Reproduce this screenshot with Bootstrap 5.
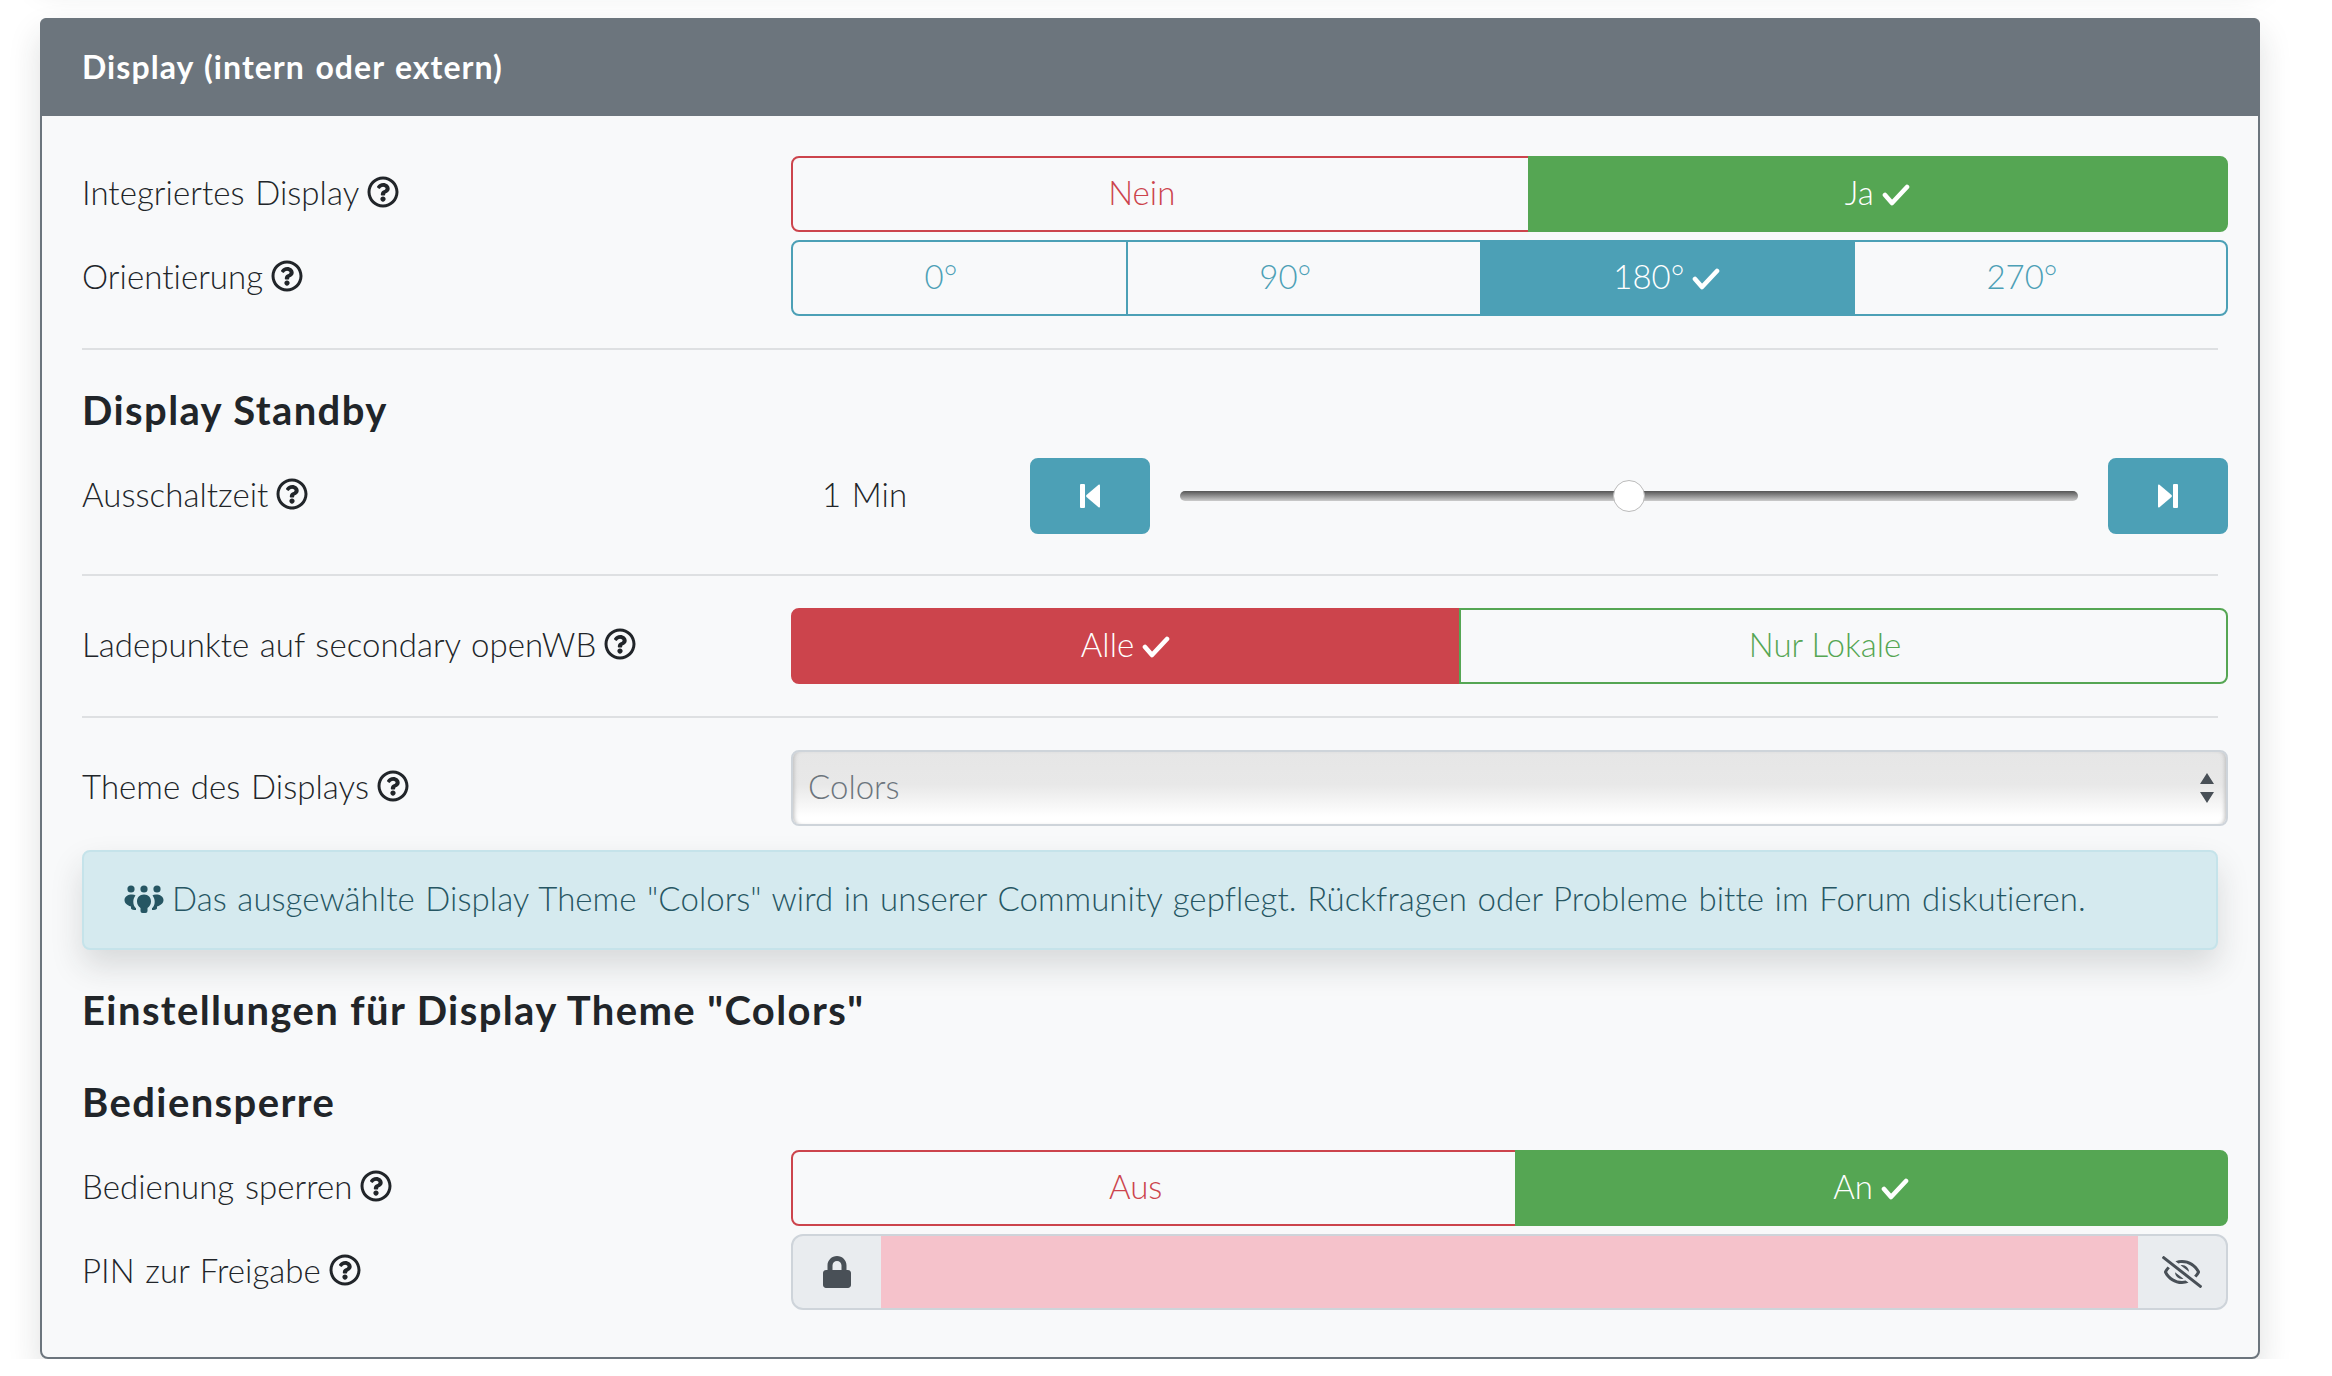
<!DOCTYPE html>
<html lang="de">
<head>
<meta charset="utf-8">
<title>Display</title>
<link href="https://cdn.jsdelivr.net/npm/bootstrap@5.3.0/dist/css/bootstrap.min.css" rel="stylesheet">
<style>
html{font-size:32px}
body{background:#fff;font-family:Lato,"Open Sans",sans-serif;font-size:33px;line-height:48px;font-weight:300;color:#212529;padding:18px 72px 0 40px;--bs-border-width:2px;--bs-border-radius:8px;letter-spacing:.05px;word-spacing:1.6px}
.prev-card{height:20px;margin:-68px 0 48px;border:0}
.set-card{--bs-card-border-width:2px;--bs-card-border-color:#6c757d;--bs-card-bg:#f8f9fa;--bs-card-border-radius:8px;--bs-card-inner-border-radius:6px;height:1341px;overflow:visible}
.set-head{background:#6c757d;color:#fff;font-size:32px;font-weight:700;letter-spacing:1.05px;height:98px;margin:-2px -2px 0;padding:0 42px;display:flex;align-items:center;border-radius:8px 8px 0 0;border:0}
.set-body{padding:40px 40px 0}
.set-row{display:flex;align-items:center;margin-right:-10px}
.set-row.tight{margin-bottom:8px}
.lbl{flex:0 0 709px;display:flex;align-items:center;gap:8px;padding-bottom:5px}
.lbl .help{margin-top:1px}
.ctl{flex:1 1 0;min-width:0}
.help{width:32px;height:32px;fill:#212529;flex:none}
.chk{width:30px;height:22px;margin-left:7px;vertical-align:-1px;fill:none;stroke:currentColor;stroke-width:4.600;stroke-linecap:round;stroke-linejoin:round}
.set-rule{margin:32px 0;border:0;border-top:2px solid #dee0e2;opacity:1}
.set-rule.after-slider{margin-top:40px}
.set-rule.before-head{margin-bottom:24px}
.btn{--bs-btn-border-width:2px;--bs-btn-border-radius:8px;--bs-btn-font-size:33px;--bs-btn-line-height:48px;--bs-btn-font-weight:300;padding-top:10px;padding-bottom:14px}
.btn-group .btn{border-radius:8px}
.tg-red{--bs-btn-color:#cc444c;--bs-btn-border-color:#cc444c;--bs-btn-hover-color:#cc444c;--bs-btn-hover-bg:transparent;--bs-btn-hover-border-color:#cc444c;--bs-btn-active-bg:#cc444c;--bs-btn-active-color:#fff}
.tg-green{--bs-btn-color:#55a653;--bs-btn-border-color:#55a653;--bs-btn-hover-color:#55a653;--bs-btn-hover-bg:transparent;--bs-btn-hover-border-color:#55a653;--bs-btn-active-bg:#55a653;--bs-btn-active-color:#fff}
.tg-info{--bs-btn-color:#4ca0b6;--bs-btn-border-color:#4ca0b6;--bs-btn-hover-color:#4ca0b6;--bs-btn-hover-bg:transparent;--bs-btn-hover-border-color:#4ca0b6;--bs-btn-active-bg:#4ca0b6;--bs-btn-active-color:#fff}
.tg-on{background:var(--bs-btn-active-bg);color:#fff}
.tg-on:hover{background:var(--bs-btn-active-bg);color:#fff}
.heading-a,.heading-b{font-size:40px;font-weight:700;line-height:48px;letter-spacing:1.4px;word-spacing:0}
.heading-a{margin:0 0 24px;padding-top:12px}
.heading-first{margin:36px 0 0}
.heading-second{margin:44px 0 24px}
.val{flex:0 0 239px;padding:0 0 5px 31px}
.step{width:120px;height:76px;padding:0;background:#4ca0b6;border-color:#4ca0b6;color:#fff;flex:none;display:flex;align-items:center;justify-content:center}
.step svg{width:20px;height:24px;fill:#fff}
.step:hover{background:#4ca0b6;border-color:#4ca0b6}
.slide{flex:1 1 0;min-width:0;margin:0 30px;height:32px;display:block;padding:0;-webkit-appearance:none;appearance:none;background:transparent}
.slide::-webkit-slider-runnable-track{height:10px;border-radius:5px;background:linear-gradient(#555,#ccc)}
.slide::-webkit-slider-thumb{-webkit-appearance:none;width:32px;height:32px;margin-top:-11px;border-radius:50%;background:#fff;border:1px solid #bbb}
.sel{height:76px;font-size:33px;font-weight:300;color:#6c757d;border:2px solid #ced4da;padding:0 40px 3px 15px;border-radius:8px;
 background:url("data:image/svg+xml,%3Csvg xmlns='http://www.w3.org/2000/svg' width='16' height='30'%3E%3Cpath fill='%23495057' d='M8 0l7 11H1zM8 30l7-11H1z'/%3E%3C/svg%3E") no-repeat right 11px center,linear-gradient(#e6e6e6 0,#e8e8e8 45%,#fff 90%);box-shadow:inset 4px 0 4px -3px #bbb,inset -4px 0 4px -3px #bbb}
.note{--bs-alert-bg:#d5eaef;--bs-alert-color:#265663;--bs-alert-border-color:#c5e3ea;--bs-alert-border-radius:8px;padding:22px 40px 26px;margin:24px 0 0;height:100px;display:flex;align-items:center;gap:8px;white-space:nowrap}
.note svg{width:40px;height:28px;fill:#265663;flex:none;margin-top:2px}
.pin{flex-wrap:nowrap}
.pin .input-group-text{background:#e9ecef;border:2px solid #ced4da;padding:0;justify-content:center;height:76px}
.pin .lock{width:92px}
.pin .lock svg{width:28px;height:32px;fill:#495057}
.pin .eye{width:92px}
.pin .eye svg{width:40px;height:32px;fill:#495057}
.pin .form-control{background:#f5c2cb;border:0;border-top:2px solid #ced4da;border-bottom:2px solid #ced4da;height:76px;border-radius:0}
</style>
</head>
<body>
<div class="card shadow prev-card"></div>
<div class="card set-card shadow">
  <div class="card-header set-head">Display (intern oder extern)</div>
  <div class="set-body">
    <div class="set-row tight">
      <div class="lbl"><span>Integriertes Display</span><svg class="help" viewBox="0 0 512 512"><use href="#q"/></svg></div>
      <div class="ctl btn-group"><button class="btn tg-red">Nein<svg class="chk invisible" viewBox="0 0 28 22"><path d="M3 11l7 8L25 3"/></svg></button><button class="btn tg-green tg-on">Ja<svg class="chk" viewBox="0 0 28 22"><path d="M3 11l7 8L25 3"/></svg></button></div>
    </div>
    <div class="set-row">
      <div class="lbl"><span>Orientierung</span><svg class="help" viewBox="0 0 512 512"><use href="#q"/></svg></div>
      <div class="ctl btn-group"><button class="btn tg-info">0°<svg class="chk invisible" viewBox="0 0 28 22"><path d="M3 11l7 8L25 3"/></svg></button><button class="btn tg-info">90°<svg class="chk invisible" viewBox="0 0 28 22"><path d="M3 11l7 8L25 3"/></svg></button><button class="btn tg-info tg-on">180°<svg class="chk" viewBox="0 0 28 22"><path d="M3 11l7 8L25 3"/></svg></button><button class="btn tg-info">270°<svg class="chk invisible" viewBox="0 0 28 22"><path d="M3 11l7 8L25 3"/></svg></button></div>
    </div>
    <hr class="set-rule before-head">
    <h3 class="heading-a">Display Standby</h3>
    <div class="set-row">
      <div class="lbl"><span>Ausschaltzeit</span><svg class="help" viewBox="0 0 512 512"><use href="#q"/></svg></div>
      <div class="ctl d-flex align-items-center">
        <div class="val">1 Min</div>
        <button class="btn step" aria-label="zurück"><svg viewBox="0 0 20 24"><rect x="0" y="0" width="5" height="24" rx="1"/><path d="M20 1.500v21q0 1.500-1.500.7L6.500 13q-1-1 0-2L18.500.8q1.500-.8 1.500.7z"/></svg></button>
        <input class="slide" type="range" min="0" max="100" value="50" aria-label="Ausschaltzeit">
        <button class="btn step" aria-label="vor"><svg viewBox="0 0 20 24"><rect x="15" y="0" width="5" height="24" rx="1"/><path d="M0 1.500v21q0 1.500 1.500.7L13.500 13q1-1 0-2L1.500.8Q0 0 0 1.500z"/></svg></button>
      </div>
    </div>
    <hr class="set-rule after-slider">
    <div class="set-row">
      <div class="lbl"><span>Ladepunkte auf secondary openWB</span><svg class="help" viewBox="0 0 512 512"><use href="#q"/></svg></div>
      <div class="ctl btn-group"><button class="btn tg-red tg-on">Alle<svg class="chk" viewBox="0 0 28 22"><path d="M3 11l7 8L25 3"/></svg></button><button class="btn tg-green">Nur Lokale<svg class="chk invisible" viewBox="0 0 28 22"><path d="M3 11l7 8L25 3"/></svg></button></div>
    </div>
    <hr class="set-rule">
    <div class="set-row">
      <div class="lbl"><span>Theme des Displays</span><svg class="help" viewBox="0 0 512 512"><use href="#q"/></svg></div>
      <div class="ctl"><select class="form-select sel" aria-label="Theme"><option>Colors</option></select></div>
    </div>
    <div class="alert note shadow" role="alert">
      <svg viewBox="0 0 40 28"><circle cx="7" cy="4" r="3.600"/><circle cx="20" cy="4" r="3.600"/><circle cx="33" cy="4" r="3.600"/><path d="M20 9.500c4.500 0 7 3 7 7 0 3-1.500 5-3.500 6.500v3q0 2-2 2h-3q-2 0-2-2v-3c-2-1.500-3.500-3.500-3.500-6.500 0-4 2.500-7 7-7zM8 9.500q2.500 0 3.500 1c-1.500 2-2.200 4-2.200 6.200 0 2.800 1 5 2.700 6.600V25q-4 0-5-1.500v-2C2.500 20 .5 18 .5 15 .5 11.500 4 9.500 8 9.500zM32 9.500c4 0 7.500 2 7.500 5.500 0 3-2 5-6.500 6.500v2q-1 1.500-5 1.500v-1.700c1.700-1.600 2.700-3.800 2.700-6.600 0-2.200-.7-4.200-2.200-6.200q1-1 3.500-1z"/></svg>
      <span>Das ausgewählte Display Theme "Colors" wird in unserer Community gepflegt. Rückfragen oder Probleme bitte im Forum diskutieren.</span>
    </div>
    <h3 class="heading-b heading-first">Einstellungen für Display Theme "Colors"</h3>
    <h4 class="heading-b heading-second">Bediensperre</h4>
    <div class="set-row tight">
      <div class="lbl"><span>Bedienung sperren</span><svg class="help" viewBox="0 0 512 512"><use href="#q"/></svg></div>
      <div class="ctl btn-group"><button class="btn tg-red">Aus<svg class="chk invisible" viewBox="0 0 28 22"><path d="M3 11l7 8L25 3"/></svg></button><button class="btn tg-green tg-on">An<svg class="chk" viewBox="0 0 28 22"><path d="M3 11l7 8L25 3"/></svg></button></div>
    </div>
    <div class="set-row">
      <div class="lbl"><span>PIN zur Freigabe</span><svg class="help" viewBox="0 0 512 512"><use href="#q"/></svg></div>
      <div class="ctl input-group pin">
        <span class="input-group-text lock"><svg viewBox="0 0 448 512"><path d="M400 224h-24v-72C376 68.200 307.800 0 224 0S72 68.200 72 152v72H48c-26.500 0-48 21.500-48 48v192c0 26.500 21.500 48 48 48h352c26.500 0 48-21.500 48-48V272c0-26.500-21.500-48-48-48zm-104 0H152v-72c0-39.700 32.300-72 72-72s72 32.300 72 72v72z"/></svg></span>
        <input class="form-control" type="password" aria-label="PIN">
        <span class="input-group-text eye"><svg viewBox="0 0 640 512"><path d="M634 471L36 3.510A16 16 0 0 0 13.510 6l-10 12.490A16 16 0 0 0 6 41l598 467.490a16 16 0 0 0 22.490-2.490l10-12.490A16 16 0 0 0 634 471zM296.790 146.470l134.790 105.380C429.360 191.910 380.480 144 320 144a112.260 112.260 0 0 0-23.210 2.470zm46.420 219.070L208.420 260.160C210.650 320.090 259.530 368 320 368a113 113 0 0 0 23.210-2.460zM320 112c98.650 0 189.090 55 237.930 144a285.530 285.530 0 0 1-44 60.200l37.740 29.500a333.700 333.700 0 0 0 52.900-75.110 32.350 32.350 0 0 0 0-29.190C550.290 135.590 442.930 64 320 64c-36.700 0-71.710 7-104.630 18.810l46.410 36.290c18.940-4.300 38.340-7.100 58.220-7.100zm0 288c-98.650 0-189.080-55-237.930-144a285.470 285.470 0 0 1 44.050-60.190l-37.740-29.500a333.600 333.600 0 0 0-52.890 75.100 32.350 32.350 0 0 0 0 29.190C89.720 376.410 197.080 448 320 448c36.700 0 71.710-7.050 104.630-18.810l-46.410-36.280C359.280 397.200 339.890 400 320 400z"/></svg></span>
      </div>
    </div>
  </div>
</div>
<svg width="0" height="0" class="d-block"><defs><path id="q" d="M256 8C119.043 8 8 119.083 8 256c0 136.997 111.043 248 248 248s248-111.003 248-248C504 119.083 392.957 8 256 8zm0 448c-110.532 0-200-89.431-200-200 0-110.495 89.472-200 200-200 110.491 0 200 89.471 200 200 0 110.530-89.431 200-200 200zm107.244-255.200c0 67.052-72.421 68.084-72.421 92.863V300c0 6.627-5.373 12-12 12h-45.647c-6.627 0-12-5.373-12-12v-8.659c0-35.745 27.100-50.034 47.579-61.516 17.561-9.845 28.324-16.541 28.324-29.579 0-17.246-21.999-28.693-39.784-28.693-23.189 0-33.894 10.977-48.942 29.969-4.057 5.120-11.460 6.071-16.666 2.124l-27.824-21.098c-5.107-3.872-6.251-11.066-2.644-16.363C184.846 131.491 214.940 112 261.794 112c49.071 0 101.450 38.304 101.450 88.800zM298 368c0 23.159-18.841 42-42 42s-42-18.841-42-42 18.841-42 42-42 42 18.841 42 42z"/></defs></svg>
<script src="https://cdn.jsdelivr.net/npm/bootstrap@5.3.0/dist/js/bootstrap.bundle.min.js"></script>
</body>
</html>
